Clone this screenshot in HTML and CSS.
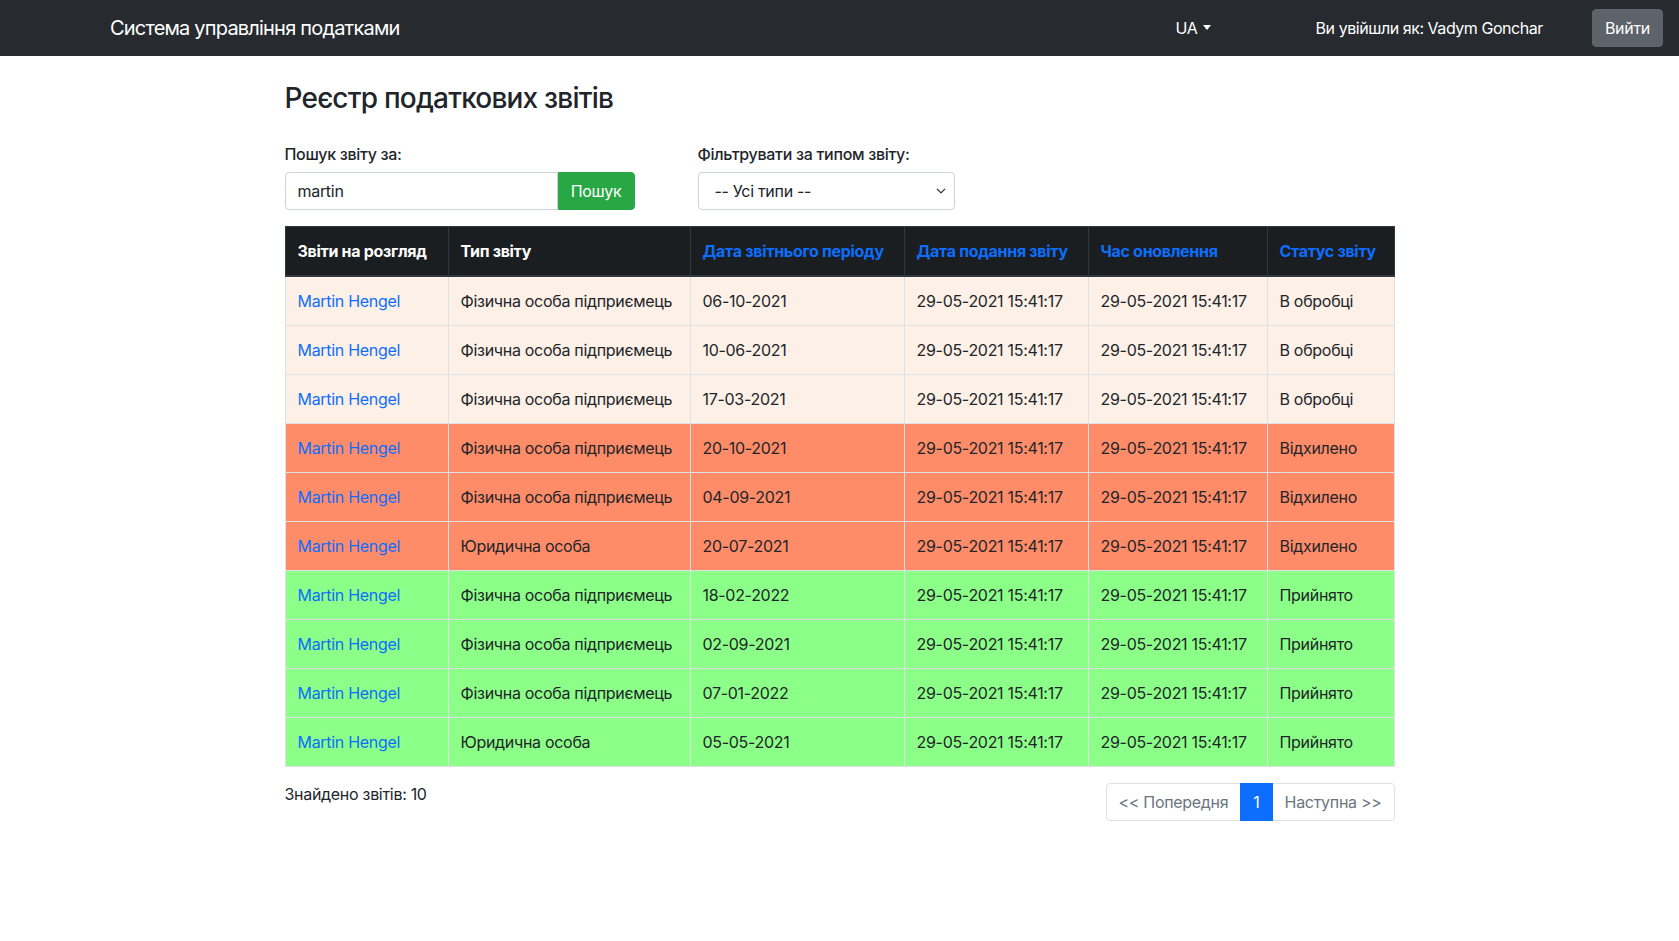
FILE: index.html
```html
<!DOCTYPE html>
<html lang="uk">
<head>
<meta charset="utf-8">
<title>Реєстр податкових звітів</title>
<link rel="stylesheet" href="styles.css">
</head>
<body>
<nav class="navbar">
  <a class="brand" href="#">Система управління податками</a>
  <div class="nav-right">
    <a class="lang" href="#">UA<span class="caret"></span></a>
    <span class="user">Ви увійшли як: Vadym Gonchar</span>
    <button class="btn-logout">Вийти</button>
  </div>
</nav>

<main class="container">
  <h3 class="title">Реєстр податкових звітів</h3>

  <div class="filters">
    <div class="field field-search">
      <label class="label">Пошук звіту за:</label>
      <div class="input-group">
        <input class="input" type="text" value="martin">
        <button class="btn-search">Пошук</button>
      </div>
    </div>
    <div class="field field-select">
      <label class="label">Фільтрувати за типом звіту:</label>
      <div class="select-wrap">
        <select class="select"><option>-- Усі типи --</option></select>
        <svg class="chev" width="12" height="12" viewBox="0 0 16 16"><path d="M2 5l6 6 6-6" fill="none" stroke="#343a40" stroke-width="2.2" stroke-linecap="round" stroke-linejoin="round"/></svg>
      </div>
    </div>
  </div>

  <table class="reports">
    <colgroup>
      <col class="c1"><col class="c2"><col class="c3"><col class="c4"><col class="c5"><col class="c6">
    </colgroup>
    <thead>
      <tr>
        <th>Звіти на розгляд</th>
        <th>Тип звіту</th>
        <th><a href="#">Дата звітнього періоду</a></th>
        <th><a href="#">Дата подання звіту</a></th>
        <th><a href="#">Час оновлення</a></th>
        <th><a href="#">Статус звіту</a></th>
      </tr>
    </thead>
    <tbody>
      <tr class="pending"><td><a href="#">Martin Hengel</a></td><td>Фізична особа підприємець</td><td>06-10-2021</td><td>29-05-2021 15:41:17</td><td>29-05-2021 15:41:17</td><td>В обробці</td></tr>
      <tr class="pending"><td><a href="#">Martin Hengel</a></td><td>Фізична особа підприємець</td><td>10-06-2021</td><td>29-05-2021 15:41:17</td><td>29-05-2021 15:41:17</td><td>В обробці</td></tr>
      <tr class="pending"><td><a href="#">Martin Hengel</a></td><td>Фізична особа підприємець</td><td>17-03-2021</td><td>29-05-2021 15:41:17</td><td>29-05-2021 15:41:17</td><td>В обробці</td></tr>
      <tr class="rejected"><td><a href="#">Martin Hengel</a></td><td>Фізична особа підприємець</td><td>20-10-2021</td><td>29-05-2021 15:41:17</td><td>29-05-2021 15:41:17</td><td>Відхилено</td></tr>
      <tr class="rejected"><td><a href="#">Martin Hengel</a></td><td>Фізична особа підприємець</td><td>04-09-2021</td><td>29-05-2021 15:41:17</td><td>29-05-2021 15:41:17</td><td>Відхилено</td></tr>
      <tr class="rejected"><td><a href="#">Martin Hengel</a></td><td>Юридична особа</td><td>20-07-2021</td><td>29-05-2021 15:41:17</td><td>29-05-2021 15:41:17</td><td>Відхилено</td></tr>
      <tr class="accepted"><td><a href="#">Martin Hengel</a></td><td>Фізична особа підприємець</td><td>18-02-2022</td><td>29-05-2021 15:41:17</td><td>29-05-2021 15:41:17</td><td>Прийнято</td></tr>
      <tr class="accepted"><td><a href="#">Martin Hengel</a></td><td>Фізична особа підприємець</td><td>02-09-2021</td><td>29-05-2021 15:41:17</td><td>29-05-2021 15:41:17</td><td>Прийнято</td></tr>
      <tr class="accepted"><td><a href="#">Martin Hengel</a></td><td>Фізична особа підприємець</td><td>07-01-2022</td><td>29-05-2021 15:41:17</td><td>29-05-2021 15:41:17</td><td>Прийнято</td></tr>
      <tr class="accepted"><td><a href="#">Martin Hengel</a></td><td>Юридична особа</td><td>05-05-2021</td><td>29-05-2021 15:41:17</td><td>29-05-2021 15:41:17</td><td>Прийнято</td></tr>
    </tbody>
  </table>

  <div class="footer-row">
    <div class="count">Знайдено звітів: 10</div>
    <ul class="pagination">
      <li class="page"><a href="#">&lt;&lt; Попередня</a></li>
      <li class="page active"><a href="#">1</a></li>
      <li class="page"><a href="#">Наступна &gt;&gt;</a></li>
    </ul>
  </div>
</main>
</body>
</html>
```

FILE: styles.css
```css
* { box-sizing: border-box; }

html, body {
  margin: 0;
  padding: 0;
}

body {
  font-family: Inter, "Noto Sans", "Liberation Sans", sans-serif;
  font-size: 16px;
  line-height: 1.5;
  letter-spacing: -0.3px;
  color: #212529;
  background: #fff;
}

a { text-decoration: none; color: #0d6efd; }

/* Navbar */
.navbar {
  height: 56px;
  background: #272b30;
  display: flex;
  align-items: center;
  padding: 0 16px 0 110px;
}

.brand {
  color: #fff;
  font-size: 20px;
  line-height: 30px;
  letter-spacing: -0.8px;
}

.nav-right {
  margin-left: auto;
  display: flex;
  align-items: center;
}

.lang {
  color: #fff;
  font-size: 16px;
  display: flex;
  align-items: center;
}

.caret {
  display: inline-block;
  margin-left: 5px;
  width: 0;
  height: 0;
  border-left: 4.5px solid transparent;
  border-right: 4.5px solid transparent;
  border-top: 5px solid #fff;
  position: relative;
  top: -1px;
}

.user {
  color: #fff;
  margin-left: 105px;
  letter-spacing: -0.45px;
}

.btn-logout {
  margin-left: 49px;
  font-family: inherit;
  font-size: 16px;
  line-height: 24px;
  letter-spacing: -0.3px;
  color: #fff;
  background: #5c636a;
  border: 1px solid #5c636a;
  border-radius: 4px;
  padding: 6px 12px;
  height: 38px;
}

/* Container */
.container {
  width: 1110px;
  margin: 0 auto;
}

.title {
  margin: 26px 0 0;
  font-size: 28px;
  line-height: 1.2;
  font-weight: 500;
  letter-spacing: -0.8px;
}

.filters {
  display: flex;
  margin-top: 26px;
}

.field-select {
  margin-left: 63px;
}

.label {
  display: block;
  font-weight: 500;
  margin-bottom: 6px;
  line-height: 24px;
}

.input-group {
  display: flex;
}

.input {
  width: 273px;
  height: 38px;
  font-family: inherit;
  font-size: 16px;
  letter-spacing: -0.3px;
  color: #212529;
  padding: 6px 12px;
  border: 1px solid #ced4da;
  border-radius: 4px 0 0 4px;
  outline: none;
}

.btn-search {
  width: 77px;
  height: 38px;
  font-family: inherit;
  font-size: 16px;
  letter-spacing: -0.3px;
  color: #fff;
  background: #28a745;
  border: 1px solid #28a745;
  border-radius: 0 4px 4px 0;
  padding: 6px 12px;
}

.select-wrap {
  position: relative;
  width: 257px;
}

.select {
  width: 257px;
  height: 38px;
  -webkit-appearance: none;
  appearance: none;
  font-family: inherit;
  font-size: 16px;
  letter-spacing: -0.3px;
  color: #212529;
  background: #fff;
  padding: 6px 30px 6px 16px;
  border: 1px solid #ced4da;
  border-radius: 4px;
}

.chev {
  position: absolute;
  right: 9px;
  top: 14px;
  width: 10px;
  height: 10px;
  pointer-events: none;
}

/* Table */
.reports {
  width: 1109px;
  margin-top: 16px;
  border-collapse: collapse;
  table-layout: fixed;
}

.c1 { width: 163px; }
.c2 { width: 242px; }
.c3 { width: 214px; }
.c4 { width: 184px; }
.c5 { width: 179px; }
.c6 { width: 127px; }

.reports th,
.reports td {
  padding: 12px;
  line-height: 24px;
  text-align: left;
  vertical-align: top;
  white-space: nowrap;
  border: 1px solid #dee2e6;
}

.reports th {
  background: #1b1e21;
  color: #fff;
  font-weight: 700;
  border-color: #32383e;
  border-bottom-width: 2px;
  border-bottom-color: #32383e;
}

.reports th a { color: #0d6efd; }

.pending td { background: #fdf0e7; }
.rejected td { background: #ff8c69; }
.accepted td { background: #8cff88; }

/* Footer row */
.footer-row {
  display: flex;
  justify-content: space-between;
  align-items: flex-start;
  margin-top: 16px;
}

.count {
  line-height: 24px;
  margin-top: -1px;
}

.pagination {
  list-style: none;
  margin: 0;
  padding: 0;
  display: flex;
}

.page a {
  display: block;
  padding: 6px 12px;
  line-height: 24px;
  color: #6c757d;
  background: #fff;
  border: 1px solid #dee2e6;
  margin-left: -1px;
}

.page:first-child a {
  margin-left: 0;
  border-radius: 4px 0 0 4px;
}

.page:last-child a {
  border-radius: 0 4px 4px 0;
}

.page.active a {
  color: #fff;
  background: #0d6efd;
  border-color: #0d6efd;
  position: relative;
}
```
